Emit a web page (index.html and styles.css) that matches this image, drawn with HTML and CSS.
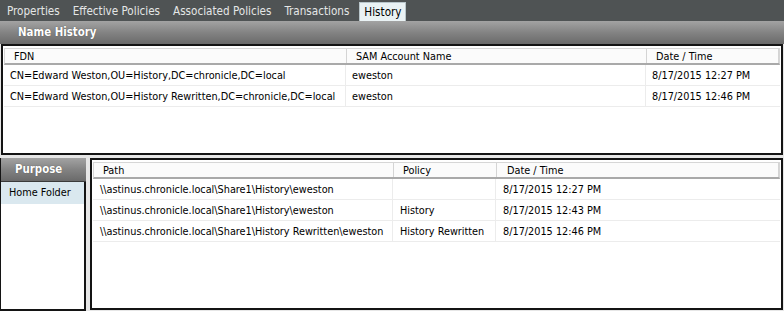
FILE: index.html
```html
<!DOCTYPE html>
<html>
<head>
<meta charset="utf-8">
<link rel="stylesheet" href="styles.css">
</head>
<body>
<div class="app">
  <div class="tabs">
    <div class="tab">Properties</div>
    <div class="tab">Effective Policies</div>
    <div class="tab">Associated Policies</div>
    <div class="tab">Transactions</div>
    <div class="tab active">History</div>
  </div>
  <div class="section-header">Name History</div>
  <div class="grid top-grid">
    <div class="row head">
      <div class="cell c-fdn">FDN</div>
      <div class="cell c-sam">SAM Account Name</div>
      <div class="cell c-date">Date / Time</div>
    </div>
    <div class="row">
      <div class="cell c-fdn">CN=Edward Weston,OU=History,DC=chronicle,DC=local</div>
      <div class="cell c-sam">eweston</div>
      <div class="cell c-date">8/17/2015 12:27 PM</div>
    </div>
    <div class="row">
      <div class="cell c-fdn">CN=Edward Weston,OU=History Rewritten,DC=chronicle,DC=local</div>
      <div class="cell c-sam">eweston</div>
      <div class="cell c-date">8/17/2015 12:46 PM</div>
    </div>
  </div>
  <div class="bottom">
    <div class="purpose">
      <div class="purpose-head">Purpose</div>
      <div class="purpose-item selected">Home Folder</div>
    </div>
    <div class="grid paths">
      <div class="row head">
        <div class="cell c-path">Path</div>
        <div class="cell c-policy">Policy</div>
        <div class="cell c-pdate">Date / Time</div>
      </div>
      <div class="row">
        <div class="cell c-path">\\astinus.chronicle.local\Share1\History\eweston</div>
        <div class="cell c-policy"></div>
        <div class="cell c-pdate">8/17/2015 12:27 PM</div>
      </div>
      <div class="row">
        <div class="cell c-path">\\astinus.chronicle.local\Share1\History\eweston</div>
        <div class="cell c-policy">History</div>
        <div class="cell c-pdate">8/17/2015 12:43 PM</div>
      </div>
      <div class="row">
        <div class="cell c-path">\\astinus.chronicle.local\Share1\History Rewritten\eweston</div>
        <div class="cell c-policy">History Rewritten</div>
        <div class="cell c-pdate">8/17/2015 12:46 PM</div>
      </div>
    </div>
  </div>
</div>
</body>
</html>
```
FILE: styles.css
```css
* { box-sizing: border-box; }
html, body { margin: 0; padding: 0; }
body {
  width: 784px;
  height: 311px;
  overflow: hidden;
  background: #e6e6e6;
  font-family: "DejaVu Sans Condensed", "Liberation Sans", sans-serif;
  font-size: 10.8px;
  color: #000;
}
.app { display: flex; flex-direction: column; height: 311px; }

.tabs {
  height: 21px;
  background: #4f5354;
  display: flex;
  align-items: flex-end;
  padding-left: 1px;
  flex: none;
}
.tab {
  height: 19px;
  line-height: 18px;
  padding: 0 6px;
  margin-right: 1px;
  color: #e4e6e6;
  white-space: nowrap;
  font-size: 11.6px;
}
.tab.active {
  background: #eaf2f4;
  color: #000;
  border: 1px solid #b9c6cb;
  border-bottom: none;
  margin-left: 3px;
  padding: 0 4px;
}

.section-header {
  height: 23px;
  flex: none;
  background: linear-gradient(#a3a3a3, #838383 50%, #6a6a6a);
  color: #fff;
  font-weight: bold;
  font-size: 11.4px;
  line-height: 22px;
  padding-left: 18px;
  text-shadow: 0 0 1px #444;
}

.grid {
  background: #fff;
  border: 2px solid #141414;
  padding: 2px 1px 0 1px;
}
.top-grid {
  height: 111px;
  flex: none;
  margin: 0 1px 0 1px;
}
.row {
  display: flex;
  height: 21px;
  line-height: 21px;
  border-bottom: 1px solid #ececec;
}
.row.head {
  height: 17px;
  line-height: 15px;
  background: #fbfbfb;
  border: 1px solid #d6d6d6;
  border-bottom: 2px solid #a9a9a9;
}
.cell {
  white-space: nowrap;
  overflow: hidden;
  padding-left: 6px;
  border-right: 1px solid #ececec;
}
.row.head .cell { padding-left: 9px; border-right: 1px solid #d4d4d4; }

.c-fdn { width: 342px; }
.c-sam { width: 300px; }
.c-date { flex: 1; border-right: none; }

.bottom {
  flex: 1;
  display: flex;
  padding-top: 3px;
  gap: 4px;
}
.purpose {
  width: 86px;
  flex: none;
  background: #fff;
  border: 2px solid #141414;
  border-top: none;
  border-left: 1px solid #141414;
}
.purpose-head {
  height: 24px;
  background: linear-gradient(#a3a3a3, #838383 50%, #6a6a6a);
  color: #fff;
  font-weight: bold;
  font-size: 11.4px;
  line-height: 23px;
  padding-left: 14px;
  border-bottom: 1px solid #3a3a3a;
  margin-right: -2px;
  text-shadow: 0 0 1px #444;
}
.purpose-item {
  height: 22px;
  line-height: 21px;
  padding-left: 8px;
}
.purpose-item.selected { background: #dae8ef; }

.paths {
  flex: 1;
  margin-right: 1px;
  margin-bottom: 1px;
}
.c-path { width: 300px; }
.c-policy { width: 103px; }
.c-pdate { flex: 1; border-right: none; }
.paths .row .cell { padding-left: 7px; }
.paths .row.head .cell { padding-left: 9px; }
.paths .row.head .c-pdate { padding-left: 10px; }
```
